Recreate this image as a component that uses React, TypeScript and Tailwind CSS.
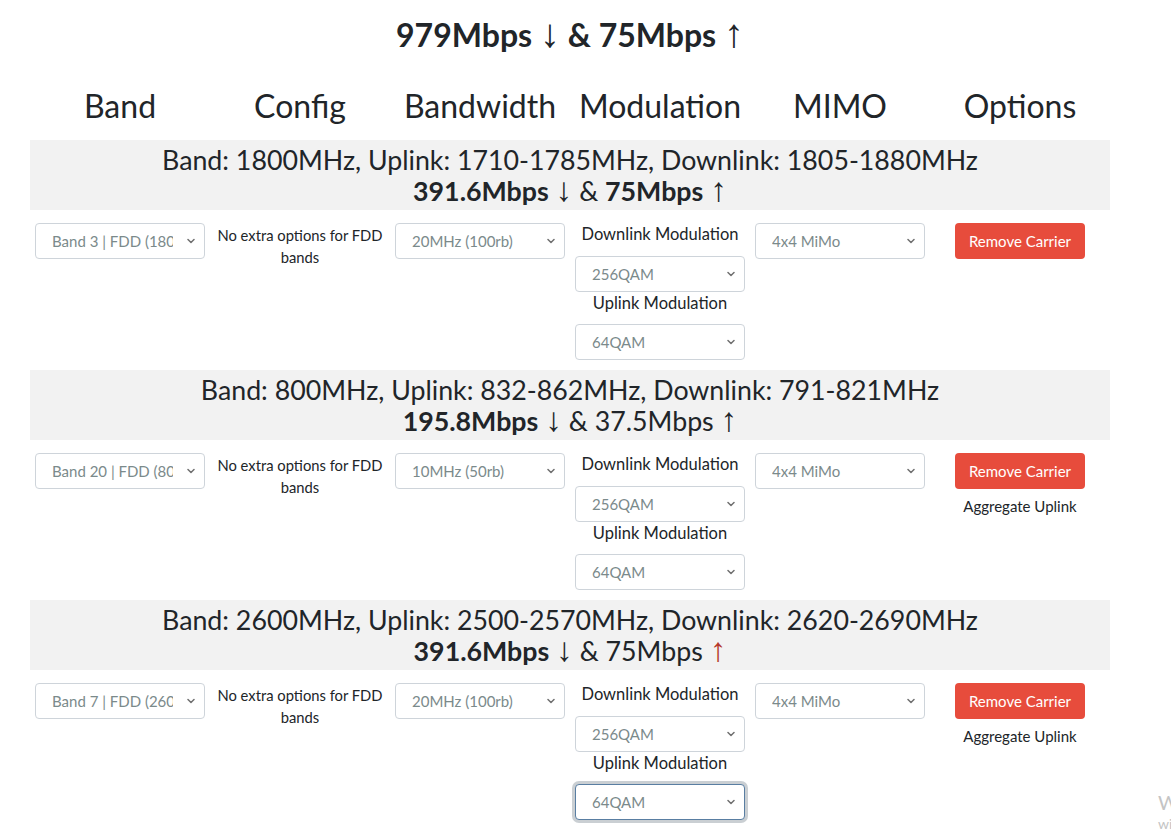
import React from "react";

function Chevron() {
  return (
    <svg
      className="pointer-events-none absolute right-[10px] top-[15px]"
      width="8"
      height="6"
      viewBox="0 0 8 6"
      fill="none"
    >
      <path d="M1 1.5L4 4.5L7 1.5" stroke="#707070" strokeWidth="1.5" strokeLinecap="round" strokeLinejoin="round" />
    </svg>
  );
}

function Select({ value, focused = false }: { value: string; focused?: boolean }) {
  return (
    <div className="relative w-[170px] h-[36px]">
      <select
        defaultValue={value}
        className={
          "appearance-none w-full h-full rounded-[4px] bg-white pl-[16px] pr-[31px] text-[15px] text-[#7b8a8b] outline-none " +
          (focused
            ? "border border-[#597ea2] shadow-[0_0_0_3px_rgba(44,62,80,0.25)]"
            : "border border-[#ced4da]")
        }
      >
        <option value={value}>{value}</option>
      </select>
      <Chevron />
    </div>
  );
}

type Carrier = {
  title: string;
  dl: string;
  ul: string;
  ulBold: boolean;
  ulArrowRed?: boolean;
  band: string;
  bw: string;
  aggregate: boolean;
  focused?: boolean;
};

const carriers: Carrier[] = [
  {
    title: "Band: 1800MHz, Uplink: 1710-1785MHz, Downlink: 1805-1880MHz",
    dl: "391.6Mbps",
    ul: "75Mbps",
    ulBold: true,
    band: "Band 3 | FDD (1800MHz)",
    bw: "20MHz (100rb)",
    aggregate: false,
  },
  {
    title: "Band: 800MHz, Uplink: 832-862MHz, Downlink: 791-821MHz",
    dl: "195.8Mbps",
    ul: "37.5Mbps",
    ulBold: false,
    band: "Band 20 | FDD (800MHz)",
    bw: "10MHz (50rb)",
    aggregate: true,
  },
  {
    title: "Band: 2600MHz, Uplink: 2500-2570MHz, Downlink: 2620-2690MHz",
    dl: "391.6Mbps",
    ul: "75Mbps",
    ulBold: false,
    ulArrowRed: true,
    band: "Band 7 | FDD (2600MHz)",
    bw: "20MHz (100rb)",
    aggregate: true,
    focused: true,
  },
];

function Arrow({ ch, red = false }: { ch: string; red?: boolean }) {
  return (
    <span
      className={
        "font-normal leading-[0] text-[1.25em] font-['Liberation_Sans',sans-serif] " +
        (red ? "text-[#b5382b]" : "text-[#212529]")
      }
    >
      {ch}
    </span>
  );
}

function CarrierBlock({ c }: { c: Carrier }) {
  return (
    <div>
      <div className="bg-[#f2f2f2] h-[70px] pt-[5px] text-center text-[26.75px] leading-[31px]">
        <div className="h-[31px]">{c.title}</div>
        <div className="h-[31px]">
          <span className="font-bold">{c.dl}</span> <Arrow ch="↓" /> &amp;{" "}
          <span className={c.ulBold ? "font-bold" : "font-normal"}>{c.ul}</span>{" "}
          <Arrow ch="↑" red={c.ulArrowRed} />
        </div>
      </div>
      <div className="grid grid-cols-6 pt-[13px] pb-[10px] items-start">
        <div className="px-[5px]">
          <Select value={c.band} />
        </div>
        <div className="px-[5px] pt-[1px] text-center text-[14.75px] leading-[22px]">
          No extra options for FDD bands
        </div>
        <div className="px-[5px]">
          <Select value={c.bw} />
        </div>
        <div className="px-[5px] flex flex-col items-center">
          <div className="text-[16.5px] leading-[24px] -mt-[1px] mb-[1px]">Downlink Modulation</div>
          <div className="mt-[9px]">
            <Select value="256QAM" />
          </div>
          <div className="text-[16.5px] leading-[24px] -mt-[1px] mb-[1px]">Uplink Modulation</div>
          <div className="mt-[8px]">
            <Select value="64QAM" focused={c.focused} />
          </div>
        </div>
        <div className="px-[5px]">
          <Select value="4x4 MiMo" />
        </div>
        <div className="px-[5px] flex flex-col items-center">
          <button className="w-[130px] h-[36px] rounded-[4px] bg-[#e74c3c] text-white text-[15px]">
            Remove Carrier
          </button>
          {c.aggregate && (
            <div className="mt-[6px] text-[15px] leading-[22px]">Aggregate Uplink</div>
          )}
        </div>
      </div>
    </div>
  );
}

export default function App() {
  return (
    <div className="relative w-[1171px] h-[830px] overflow-hidden bg-white text-[#212529] font-[Lato,'Liberation_Sans',sans-serif]">
      <div className="ml-[30px] w-[1080px]">
        <h1 className="pt-[16px] h-[54px] text-center text-[32px] leading-[38px] font-bold">
          979Mbps <Arrow ch="↓" /> &amp; 75Mbps <Arrow ch="↑" />
        </h1>
        <div className="mt-[33px] grid grid-cols-6 text-center text-[32px] leading-[38px]">
          <div>Band</div>
          <div>Config</div>
          <div>Bandwidth</div>
          <div>Modulation</div>
          <div>MIMO</div>
          <div>Options</div>
        </div>
        <div className="mt-[15px]">
          {carriers.map((c, i) => (
            <CarrierBlock key={i} c={c} />
          ))}
        </div>
        <button className="w-[102px] h-[38px] rounded-[4px] bg-[#2c3e50] text-white text-[15px]">
          Add Carrier
        </button>
      </div>
      <div className="absolute left-[1158px] top-[790px] text-[#c4c4c4] leading-tight whitespace-nowrap">
        <div className="text-[20px]">Windows</div>
        <div className="text-[14px]">windows</div>
      </div>
    </div>
  );
}
